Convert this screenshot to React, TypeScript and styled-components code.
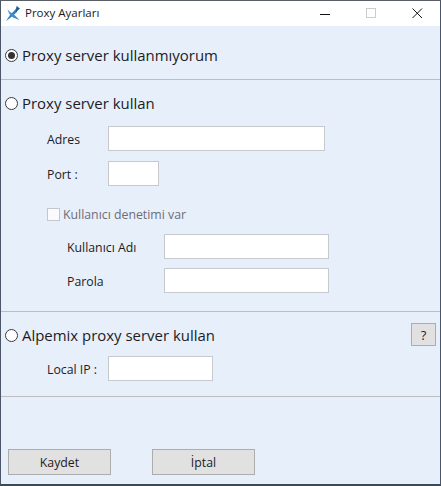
import React from "react";
import styled, { createGlobalStyle } from "styled-components";

const Global = createGlobalStyle`
  html, body { margin: 0; padding: 0; background: #e7effb; }
  body { font-family: "Open Sans", "Noto Sans", sans-serif; }
  * { box-sizing: border-box; }
`;

const Window = styled.div`
  width: 441px;
  height: 486px;
  display: flex;
  flex-direction: column;
  background: #e7effb;
  border-top: 1px solid #5b6068;
  border-left: 1px solid #4a5568;
  border-right: 1px solid #4a5568;
  border-bottom: 2px solid #3c4a58;
  overflow: hidden;
`;

const TitleBar = styled.div`
  height: 25px;
  flex: none;
  background: #fff;
  display: flex;
  align-items: center;
  padding-left: 4px;
`;

const TitleText = styled.span`
  font-size: 11.5px;
  color: #1a1a1a;
  margin: 0 0 2px 4px;
  flex: 1;
`;

const WinButton = styled.span`
  width: 46px;
  height: 25px;
  display: flex;
  align-items: center;
  justify-content: center;
`;

const Section = styled.section<{ $h: number }>`
  height: ${(p) => p.$h}px;
  flex: none;
  border-bottom: 1px solid #bcbec0;
  display: flex;
  flex-direction: column;
`;

const RadioRow = styled.div<{ $top: number }>`
  display: flex;
  align-items: center;
  height: 20px;
  margin-top: ${(p) => p.$top}px;
  padding-left: 4px;
`;

const Radio = styled.span<{ $on?: boolean }>`
  width: 13px;
  height: 13px;
  border-radius: 50%;
  border: 1px solid #3a3a3a;
  background: #fff;
  display: flex;
  align-items: center;
  justify-content: center;
  flex: none;
  &::after {
    content: "";
    display: ${(p) => (p.$on ? "block" : "none")};
    width: 7px;
    height: 7px;
    border-radius: 50%;
    background: #333;
  }
`;

const RadioLabel = styled.span`
  font-size: 14.95px;
  color: #1c1c24;
  margin-left: 4px;
  white-space: nowrap;
`;

const Field = styled.div<{ $top: number; $left?: number }>`
  display: flex;
  align-items: center;
  height: 25px;
  margin-top: ${(p) => p.$top}px;
  padding-left: ${(p) => p.$left ?? 46}px;
`;

const FieldLabel = styled.label<{ $w: number }>`
  width: ${(p) => p.$w}px;
  flex: none;
  font-size: 12.3px;
  padding-top: 2px;
  color: #1c1c24;
`;

const Input = styled.div<{ $w: number }>`
  width: ${(p) => p.$w}px;
  height: 25px;
  background: #fff;
  border: 1px solid #c6cacf;
`;

const CheckRow = styled.div`
  display: flex;
  align-items: center;
  height: 16px;
  margin-top: 20px;
  padding-left: 46px;
`;

const CheckBox = styled.span`
  width: 13px;
  height: 13px;
  flex: none;
  background: #fbfbfd;
  border: 1px solid #c4c7cc;
`;

const CheckLabel = styled.span`
  font-size: 12.3px;
  padding-top: 1px;
  color: #6d6d76;
  margin-left: 3px;
`;

const ThirdHead = styled.div`
  display: flex;
  align-items: flex-start;
  justify-content: space-between;
  padding-right: 4px;
`;

const HelpButton = styled.button`
  width: 25px;
  height: 23px;
  margin-top: 11px;
  padding: 0;
  background: #e1e1e1;
  border: 1px solid #adadad;
  font: inherit;
  font-size: 13px;
  color: #1c1c3c;
`;

const Footer = styled.div`
  flex: 1;
  display: flex;
  align-items: flex-end;
  gap: 41px;
  padding: 0 0 9px 7px;
`;

const ActionButton = styled.button`
  width: 103px;
  height: 26px;
  padding: 0;
  background: #e1e1e1;
  border: 1px solid #adadad;
  font: inherit;
  font-size: 12.3px;
  color: #1c1c24;
`;

export default function App() {
  return (
    <Window>
      <Global />
      <TitleBar>
        <svg width="16" height="17" viewBox="0 0 16 17">
          <path d="M1 16 L5 10 L9 6 L13 1 L12 7 L8 10.5 L4.5 13.5 Z" fill="#2f7fc4" />
          <path d="M2.5 3.5 C3.5 6.5 6 8 9 9.5 L14.5 15 L8 12.5 C5 10.5 3 7.5 2.5 3.5 Z" fill="#3f8cd2" />
          <path d="M11.5 1 L15 3.5 L11 7 Z" fill="#1c5a96" />
        </svg>
        <TitleText>Proxy Ayarları</TitleText>
        <WinButton>
          <svg width="11" height="11" viewBox="0 0 11 11">
            <path d="M0 6.5 H10" stroke="#111" strokeWidth="1" />
          </svg>
        </WinButton>
        <WinButton>
          <svg width="11" height="11" viewBox="0 0 11 11">
            <rect x="0.5" y="0.5" width="9" height="9" fill="none" stroke="#ccc" />
          </svg>
        </WinButton>
        <WinButton>
          <svg width="11" height="11" viewBox="0 0 11 11">
            <path d="M0.5 0.5 L10 10 M10 0.5 L0.5 10" stroke="#111" strokeWidth="1" />
          </svg>
        </WinButton>
      </TitleBar>

      <Section $h={54}>
        <RadioRow $top={19}>
          <Radio $on />
          <RadioLabel>Proxy server kullanmıyorum</RadioLabel>
        </RadioRow>
      </Section>

      <Section $h={232}>
        <RadioRow $top={13}>
          <Radio />
          <RadioLabel>Proxy server kullan</RadioLabel>
        </RadioRow>
        <Field $top={13}>
          <FieldLabel $w={61}>Adres</FieldLabel>
          <Input $w={217} />
        </Field>
        <Field $top={10}>
          <FieldLabel $w={61}>Port :</FieldLabel>
          <Input $w={51} />
        </Field>
        <CheckRow>
          <CheckBox />
          <CheckLabel>Kullanıcı denetimi var</CheckLabel>
        </CheckRow>
        <Field $top={12} $left={66}>
          <FieldLabel $w={97}>Kullanıcı Adı</FieldLabel>
          <Input $w={165} />
        </Field>
        <Field $top={9} $left={66}>
          <FieldLabel $w={97}>Parola</FieldLabel>
          <Input $w={165} />
        </Field>
      </Section>

      <Section $h={85}>
        <ThirdHead>
          <RadioRow $top={13}>
            <Radio />
            <RadioLabel>Alpemix proxy server kullan</RadioLabel>
          </RadioRow>
          <HelpButton>?</HelpButton>
        </ThirdHead>
        <Field $top={10}>
          <FieldLabel $w={61}>Local IP :</FieldLabel>
          <Input $w={105} />
        </Field>
      </Section>

      <Footer>
        <ActionButton>Kaydet</ActionButton>
        <ActionButton>İptal</ActionButton>
      </Footer>
    </Window>
  );
}
